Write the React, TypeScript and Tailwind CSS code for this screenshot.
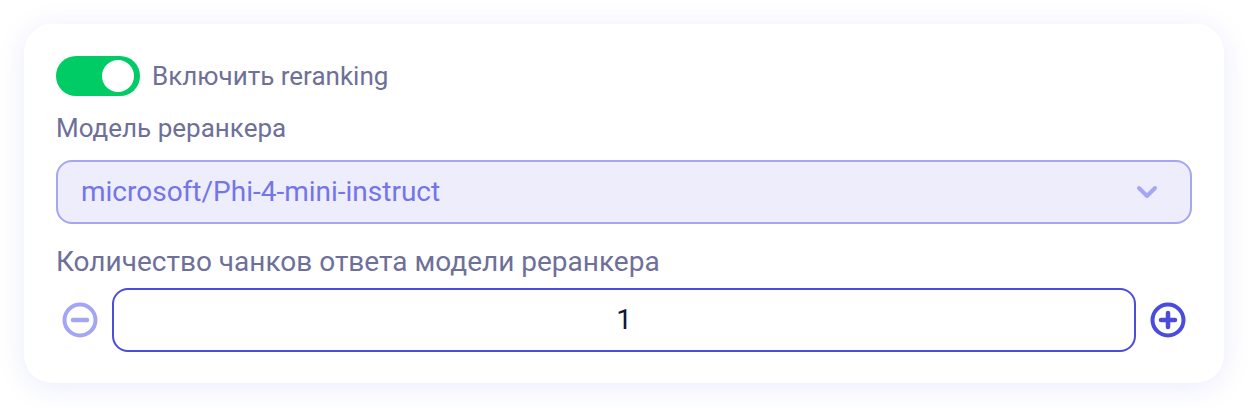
import React, { useState } from 'react';

const MinusIcon = () => (
  <svg width="36" height="36" viewBox="0 0 36 36" fill="none">
    <circle cx="18" cy="18" r="15.5" stroke="#a5a6f2" strokeWidth="4" />
    <path d="M11 18h14" stroke="#a5a6f2" strokeWidth="4.5" strokeLinecap="round" />
  </svg>
);

const PlusIcon = () => (
  <svg width="36" height="36" viewBox="0 0 36 36" fill="none">
    <circle cx="18" cy="18" r="15.5" stroke="#4a4cdc" strokeWidth="4" />
    <path d="M11 18h14M18 11v14" stroke="#4a4cdc" strokeWidth="4.5" strokeLinecap="round" />
  </svg>
);

export default function App() {
  const [enabled, setEnabled] = useState(true);
  const [count, setCount] = useState(1);

  return (
    <div className="w-[1248px] h-[408px] bg-white p-6 font-['Roboto',_'Noto_Sans',_sans-serif]">
      <div className="rounded-[28px] bg-white px-8 pt-8 pb-[31px] shadow-[0_4px_28px_rgba(108,110,240,0.14)]">
        {/* toggle */}
        <div className="flex items-center gap-3 h-10">
          <button
            onClick={() => setEnabled(!enabled)}
            className="relative w-[84px] h-10 rounded-full bg-[#00cc66] flex items-center shrink-0"
          >
            <span className="absolute right-[6px] top-1 w-8 h-8 rounded-full bg-white" />
          </button>
          <span className="text-[26px] leading-8 text-[#6e7099]">Включить reranking</span>
        </div>

        {/* model select */}
        <div className="mt-4 text-[26px] leading-8 text-[#6e7099]">Модель реранкера</div>
        <div className="mt-4 h-16 rounded-2xl border-2 border-[#a5a6f4] bg-[#ededfb] flex items-center justify-between pl-[23px] pr-[32px]">
          <span className="text-[28px] text-[#7475e6]">microsoft/Phi-4-mini-instruct</span>
          <svg width="22" height="14" viewBox="0 0 22 14" fill="none">
            <path d="M3 3l8 8 8-8" stroke="#a5a6f4" strokeWidth="4" strokeLinecap="round" strokeLinejoin="round" />
          </svg>
        </div>

        {/* chunks count */}
        <div className="mt-[22px] text-[28px] leading-8 text-[#6e7099]">Количество чанков ответа модели реранкера</div>
        <div className="mt-[10px] flex items-center gap-2">
          <button onClick={() => setCount(Math.max(1, count - 1))} className="w-12 h-12 flex items-center justify-center shrink-0">
            <MinusIcon />
          </button>
          <div className="flex-1 h-16 rounded-2xl border-2 border-[#4a4cdc] flex items-center justify-center text-[28px] text-[#111633]">
            {count}
          </div>
          <button onClick={() => setCount(count + 1)} className="w-12 h-12 flex items-center justify-center shrink-0">
            <PlusIcon />
          </button>
        </div>
      </div>
    </div>
  );
}
